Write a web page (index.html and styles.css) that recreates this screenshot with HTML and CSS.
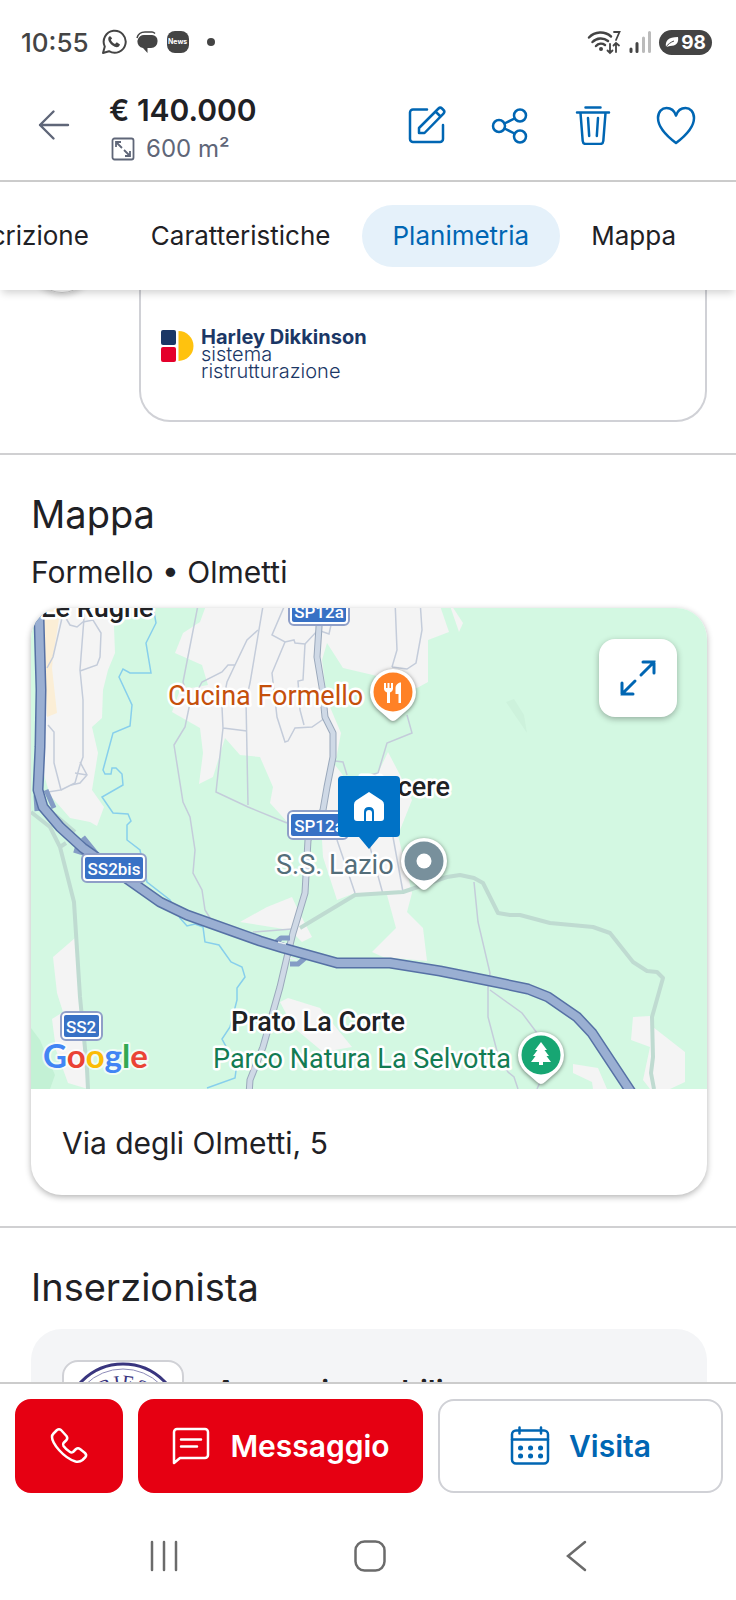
FILE: index.html
```html
<!DOCTYPE html>
<html lang="it">

<head>
  <meta charset="UTF-8">
  <meta name="viewport" content="width=device-width, initial-scale=1.0">
  <title>Annuncio</title>
  <link rel="stylesheet" href="styles.css">
</head>

<body>
  <div class="screen">
    <div class="status-bar">
      <span class="clock">10:55</span>
      <svg class="status-whatsapp" width="26" height="26" viewBox="0 0 26 26">
        <path d="M2 24l1.800-6.400A11 11 0 1 1 8 22.200z" fill="none" stroke="#444" stroke-width="2" stroke-linejoin="round" />
        <path d="M9 7c-3 1.500-2 6 2.200 9.200 4 3 7 2.300 7.800-.7l-3.200-2.200-1.800 1.600c-2-.8-3.500-2.300-4.200-4.200l1.400-1.500z" fill="#444" />
      </svg>
      <svg width="22" height="24" viewBox="0 0 22 24">
        <path d="M1 8C2 4 5 2 9 2h7c1 0 2 .5 3 1.500" fill="none" stroke="#444" stroke-width="1.500" />
        <path d="M9 5h7a5.500 5.500 0 0 1 5.500 6A6.500 6.500 0 0 1 15 18h-3.500v5L7 18A6.500 6.500 0 0 1 9 5z" fill="#444" />
      </svg>
      <span class="news-badge">News</span>
      <span class="dot"></span>
      <div class="status-right">
        <svg width="34" height="26" viewBox="0 0 34 26" fill="none" stroke="#444" stroke-linecap="round">
          <path d="M2 8.500a16 16 0 0 1 22-1M5.500 13a11.500 11.500 0 0 1 15.500-1M9 17a7 7 0 0 1 9-1" stroke-width="2.500" />
          <circle cx="14" cy="20" r="2" fill="#444" stroke="none" />
          <path d="M27 3h5.500l-3.500 8M23 15v9M20.500 21.500L23 24l2.500-2.500M29 23v-9M26.500 16.500L29 14l3 2.500" stroke-width="1.800" />
        </svg>
        <svg width="22" height="24" viewBox="0 0 22 24" stroke-width="3" stroke-linecap="round">
          <path d="M2 19v2.500M8 13.500v8" stroke="#444" />
          <path d="M14.500 8v13.500M20.500 2.500v19" stroke="#bbb" />
        </svg>
        <span class="battery">
          <svg width="14" height="12" viewBox="0 0 14 12">
            <path d="M1 11C0 5 3 1 13 1c1 6-2 9-8 9z" fill="#fff" />
            <path d="M0 12C3 8 6 6 9 5" fill="none" stroke="#444" />
          </svg>
          98
        </span>
      </div>
    </div>

    <header class="header">
      <button class="icon-button" aria-label="Indietro">
        <svg width="32" height="32" viewBox="0 0 32 32" fill="none" stroke="#5f6678" stroke-width="2.400" stroke-linecap="round" stroke-linejoin="round">
          <path d="M30 16H2M15.500 2.500L2 16l13.500 13.500" />
        </svg>
      </button>
      <div class="summary">
        <div class="price">€ 140.000</div>
        <div class="surface">
          <svg width="24" height="24" viewBox="0 0 24 24" fill="none" stroke="#5f6678" stroke-width="1.800">
            <rect x="1.500" y="1.500" width="21" height="21" rx="2" />
            <path d="M5 10V5h5M5 5l6 6M19 14v5h-5M19 19l-6-6" />
          </svg>
          600 m²
        </div>
      </div>
      <div class="actions">
        <button class="icon-button" aria-label="Modifica">
          <svg width="40" height="40" viewBox="0 0 40 40" class="icon">
            <path d="M20 4.500H6a3 3 0 0 0-3 3V34a3 3 0 0 0 3 3h27a3 3 0 0 0 3-3V20" />
            <path d="M12 23L31.500 3.500a2.500 2.500 0 0 1 3.500 0l1.500 1.500a2.500 2.500 0 0 1 0 3.500L17.500 28H12zM28.500 6.500l5 5" />
          </svg>
        </button>
        <button class="icon-button" aria-label="Condividi">
          <svg width="40" height="40" viewBox="0 0 40 40" class="icon">
            <circle cx="9" cy="21" r="6" />
            <circle cx="30" cy="10.500" r="6" />
            <circle cx="30" cy="31.500" r="6" />
            <path d="M14.500 18.500l10-5M14.500 23.500l10 5" />
          </svg>
        </button>
        <button class="icon-button" aria-label="Elimina">
          <svg width="40" height="40" viewBox="0 0 40 40" class="icon">
            <path d="M12.500 2.500h15M4 7.500h32M7.500 8l2.200 28c.2 2 1.300 3 3.300 3h14c2 0 3.100-1 3.300-3L32.500 8M15 13l1.200 18M25 13l-1.200 18" />
          </svg>
        </button>
        <button class="icon-button" aria-label="Salva">
          <svg width="40" height="40" viewBox="0 0 40 40" class="icon">
            <path d="M20 38C12 32 2 23 2 13 2 6.500 6 3 10.500 3 15 3 18.500 6 20 10.500 21.500 6 25 3 29.500 3 34 3 38 6.500 38 13c0 10-10 19-18 25z" />
          </svg>
        </button>
      </div>
    </header>

    <nav class="tabs">
      <a class="tab" href="#">Descrizione</a>
      <a class="tab" href="#">Caratteristiche</a>
      <a class="tab active" href="#">Planimetria</a>
      <a class="tab" href="#mappa">Mappa</a>
    </nav>

    <main class="content">
      <section class="partner">
        <div class="round-handle"></div>
        <div class="partner-card">
          <svg width="34" height="32" viewBox="0 0 34 32">
            <rect x="0" y="0" width="15" height="15" rx="2" fill="#1b3766" />
            <rect x="0" y="17" width="15" height="15" rx="2" fill="#e4002b" />
            <path d="M17.500 1v30a15 15 0 0 0 0-30z" fill="#ffc20e" />
          </svg>
          <div class="partner-name">
            <b>Harley Dikkinson</b>
            <span>sistema</span>
            <span>ristrutturazione</span>
          </div>
        </div>
      </section>

      <section class="section" id="mappa">
        <h2>Mappa</h2>
        <p class="place">Formello • Olmetti</p>
        <div class="map-card">
          <svg class="map" viewBox="31 608 676 481" preserveAspectRatio="xMidYMid slice">
            <rect x="0" y="590" width="740" height="520" fill="#d3f8e2" />
            <path d="M31 1028l9 12 15 35-5 14H31z" fill="#c3f1d5" />
            <path d="M506 702l8-3 10 16 3 18z" fill="#cdf2dc" />

            <!-- built-up areas -->
            <g fill="#f4f4f4">
              <path d="M43 600H118L114 627 115 653 108 670 103 690 102 718 92 727 98 753 92 790 104 807 97 826 90 822 70 818 50 795 44 775z" />
              <path d="M208 600L200 622 183 633 175 653 202 665 208 685 180 690 172 712 200 728 203 753 199 784 213 777 225 738 240 755 260 757 273 787 270 803 290 825 322 840 323 857 337 900 355 893 387 895 396 928 372 952 383 957 427 961 423 928 407 912 412 893 398 835 412 800 400 775 388 752 378 773 345 778 335 765 341 733 327 700 322 660 327 643 343 668 373 675 417 688 428 682 428 640 449 632 438 600z" />
              <path d="M448 600L463 623 459 632z" />
              <path d="M240 922l27-15 25-10 6 13 14 27-10 5-12-12z" />
              <path d="M75 938L53 957 57 993 63 1012 52 1019 56 1050 68 1083 88 1089 80 1012z" />
              <path d="M280 1002l8-4 32 10 32 39-29 5-30-25z" />
              <path d="M633 1017l17-1 3 11 32 25v30l-15 7h-20l-7-9 7-33-19-7z" />
              <path d="M573 1064l25 4 9 21h-14l-1-7-19-9z" />
            </g>
            <path d="M43 600H62L53 657 52 668 57 713 47 717z" fill="#fbeed6" />

            <!-- water -->
            <g fill="none" stroke="#87cfec" stroke-width="1.500">
              <path d="M152 600L156 623 146 643 151 673H130L123 669 119 677 132 705 130 726 113 733 103 770 105 774H111L112 768H116L122 774 123 785 102 797 113 813 128 814 131 821 127 825V840L140 850 147 882 170 900 180 918 187 926 195 924 203 927 205 942 219 945 231 962 242 967 245 977 237 988V1000L230 1027 222 1039 228 1050 237 1063 235 1078 207 1088" />
            </g>

            <!-- minor roads -->
            <g fill="none" stroke="#c4ccda" stroke-width="1.500">
              <path d="M84 600V618L80 670 83 700V757L80 765 75 783 61 790" />
              <path d="M64 615L70 625 77 627 83 622 93 620 101 633 100 657 97 665 80 671" />
              <path d="M62 618L53 657 47 668M48 725L54 732V763L61 790 48 792M80 762L87 775 80 783 71 785M75 773L87 775" />
              <path d="M199 600L183 682 190 703 185 727 174 745 183 802 190 817 195 850 193 873 202 890 205 910 210 918" />
              <path d="M258 630L247 640 235 665H228L222 672 202 682 195 695M235 665L227 682 222 707 223 728 216 792 248 807 287 823M223 728L247 731" />
              <path d="M264 600L250 683 246 700 248 805" />
              <path d="M287 600L272 635 285 642 294 640 295 643 305 644 318 630 329 634 331 625" />
              <path d="M285 642L272 673 277 717 285 742 288 741 295 728 312 727 325 718M305 644L303 680 298 681 300 710 304 725" />
              <path d="M395 600L397 650 392 667M420 600L422 630 416 663 407 669 392 667M407 715L412 733 387 743 378 773 362 777M335 761L343 762 347 775" />
              <path d="M337 840L355 893M370 847L383 894M393 837L403 892M253 932L292 929" />
              <path d="M474 882L478 922 490 973 488 988V1017L498 1055 508 1072 514 1077 518 1089M490 990L522 1013 537 1033M541 1080L537 1089" />
            </g>
            <g fill="none" stroke="#bfdbd1" stroke-width="4" stroke-linejoin="round">
              <path d="M300 928L355 895 403 892 447 877 460 875 474 878 483 883 498 913 510 915 520 915 550 923 593 927 610 933 633 962 647 971 657 972 663 978 652 1017 653 1057 651 1073 654 1089" />
              <path d="M31 812L50 827 60 847 74 902 80 997 87 1069 88 1089M55 815L75 832M60 847L66 843" />
            </g>

            <!-- SP12a -->
            <path d="M319 600V627L317 657 322 687 325 717 333 733V757L327 787 323 810 308 840 305 893 293 933 287 957 280 987 263 1047 250 1080 249 1095" class="road-casing" />
            <path d="M319 600V627L317 657 322 687 325 717 333 733V757L327 787 323 810 308 840 305 893 293 933 287 957 280 987 263 1047 250 1080 249 1095" class="road" />

            <!-- SS2bis -->
            <path d="M274 944L281 938H290M290 964H298L305 958M46 790L54 808M36 795L37 811M83 837L100 858M74 850L90 855" class="ramp" />
            <path d="M39 600V618L41 690 40 747 38 790 43 807 60 827 83 848 133 883 160 902 187 915 260 941 283 948 337 963H390L440 971 490 981 528 989 548 997 577 1017 592 1033 629 1089 640 1106" class="highway-casing" />
            <path d="M39 600V618L41 690 40 747 38 790 43 807 60 827 83 848 133 883 160 902 187 915 260 941 283 948 337 963H390L440 971 490 981 528 989 548 997 577 1017 592 1033 629 1089 640 1106" class="highway" />
            <path d="M278 942l8 2M290 958l7 2" stroke="#e9f1f4" stroke-width="1.500" />

            <!-- road shields -->
            <g class="shield">
              <rect x="289" y="596" width="60" height="29" rx="5" />
              <rect x="292" y="599" width="54" height="23" rx="2" class="plate" />
              <text x="319" y="618">SP12a</text>
              <rect x="288" y="811" width="60" height="28" rx="5" />
              <rect x="291" y="814" width="54" height="22" rx="2" class="plate" />
              <text x="319" y="832">SP12a</text>
              <rect x="82" y="854" width="64" height="28" rx="5" />
              <rect x="85" y="857" width="58" height="22" rx="2" class="plate" />
              <text x="114" y="875">SS2bis</text>
              <rect x="61" y="1012" width="41" height="28" rx="5" />
              <rect x="64" y="1015" width="35" height="22" rx="2" class="plate" />
              <text x="81" y="1033">SS2</text>
            </g>

            <!-- labels -->
            <g class="label">
              <text x="41" y="617" class="town">Le Rughe</text>
              <text x="450" y="796" text-anchor="end" class="town">Piacere</text>
              <text x="231" y="1031" class="town">Prato La Corte</text>
              <text x="168" y="705" fill="#c5500b">Cucina Formello</text>
              <text x="276" y="874" fill="#546e7a">S.S. Lazio</text>
              <text x="213" y="1068" fill="#137c53">Parco Natura La Selvotta</text>
              <text x="43" y="1068" class="google"><tspan fill="#4285f4">G</tspan><tspan fill="#ea4335">o</tspan><tspan fill="#fbbc05">o</tspan><tspan fill="#4285f4">g</tspan><tspan fill="#34a853">l</tspan><tspan fill="#ea4335">e</tspan></text>
            </g>

            <!-- pins -->
            <g transform="translate(393 692)">
              <path class="pin" d="M-16 16.500L-4 27Q0 31 4 27L16 16.500A23 23 0 1 0-16 16.500z" />
              <circle r="19.500" fill="#ff8126" />
              <path d="M-8-9v6M-4.500-9v6M-1-9v6" stroke="#fff" stroke-width="2" />
              <path d="M-9-4h9a4.500 4.500 0 0 1-3 4.500V11h-3V.5A4.500 4.500 0 0 1-9-4zM8-9.500V11H5.500V2H2.500v-6C2.500-7 5-9.500 8-9.500z" fill="#fff" />
            </g>
            <g transform="translate(424 861)">
              <path class="pin" d="M-16 16.500L-4 27Q0 31 4 27L16 16.500A23 23 0 1 0-16 16.500z" />
              <circle r="19.500" fill="#78909c" />
              <circle r="7.500" fill="#fff" />
            </g>
            <g transform="translate(541 1055)">
              <path class="pin" d="M-16 16.500L-4 27Q0 31 4 27L16 16.500A23 23 0 1 0-16 16.500z" />
              <circle r="19.500" fill="#17a673" />
              <path d="M0-13L6-5H3.500L8 1H5.500L10 7H2V10H-2V7H-10L-5.500 1H-8L-3.500-5H-6z" fill="#fff" />
            </g>
            <path d="M342 776h54a4 4 0 0 1 4 4v53a4 4 0 0 1-4 4h-17l-10 12-10-12h-17a4 4 0 0 1-4-4v-53a4 4 0 0 1 4-4z" fill="#0072c6" />
            <path d="M369 792l13 8.500q2 1.500 2 4V818q0 3-3 3h-7v-9q0-5-5-5t-5 5v9h-7q-3 0-3-3v-13.500q0-2.500 2-4z" fill="#fff" />
            <path d="M366 821v-8q0-3 3-3t3 3v8z" fill="#fff" />
          </svg>
          <button class="expand" aria-label="Espandi mappa">
            <svg width="40" height="40" viewBox="0 0 40 40" fill="none" stroke="#0066b3" stroke-width="3" stroke-linecap="round">
              <path d="M23 17L36 4M25 4h11v11M17 23L4 36M4 25v11h11" />
            </svg>
          </button>
          <div class="address">Via degli Olmetti, 5</div>
        </div>
      </section>

      <section class="section">
        <h2>Inserzionista</h2>
        <div class="agency">
          <div class="agency-logo">
            <svg width="118" height="118" viewBox="0 0 118 118">
              <defs>
                <path id="arc" d="M24 62a35 35 0 0 1 70 0" />
              </defs>
              <circle cx="59" cy="60" r="58" fill="none" stroke="#39357f" stroke-width="3" />
              <circle cx="59" cy="60" r="53" fill="none" stroke="#8d8bb8" />
              <text class="seal"><textPath href="#arc" startOffset="50%">A RIES A</textPath></text>
            </svg>
          </div>
          <div class="agency-name">Aurora immobiliare</div>
        </div>
      </section>
    </main>

    <div class="bottom-bar">
      <button class="cta call" aria-label="Chiama">
        <svg width="40" height="40" viewBox="0 0 40 40" class="icon">
          <path d="M4.500 7.500l3.500-3.500q2-1.500 4 0l5.500 6q1.500 2 0 4l-3 3q-1 1.500 0 3 2.500 3.500 6.500 6 1.500 1 3 0l3-3q2-1.500 4 0l5 4q2 2 .5 4l-3 3q-3 2.500-7 1.500Q18 33 10 24 3 16 3 11q0-2 1.500-3.500z" />
        </svg>
      </button>
      <button class="cta message">
        <svg width="40" height="40" viewBox="0 0 40 40" class="icon">
          <path d="M3 37V6a3 3 0 0 1 3-3h28a3 3 0 0 1 3 3v23a3 3 0 0 1-3 3H9zM10 13.500h20M10 20.500h16" />
        </svg>
        Messaggio
      </button>
      <button class="cta visit">
        <svg width="40" height="40" viewBox="0 0 40 40" class="icon">
          <rect x="2" y="4.500" width="36" height="33" rx="4" />
          <path d="M2 13.500h36M9.500 1.500v6M31 1.500v6" />
          <path d="M10.500 22h.1M20.500 22h.1M30.500 22h.1M10.500 30h.1M20.500 30h.1M30.500 30h.1" stroke-width="5" />
        </svg>
        Visita
      </button>
    </div>

    <div class="system-nav">
      <button class="icon-button" aria-label="Recenti">
        <svg width="32" height="32" viewBox="0 0 32 32" class="nav-icon">
          <path d="M4 2v28M16 2v28M28 2v28" />
        </svg>
      </button>
      <button class="icon-button" aria-label="Home">
        <svg width="32" height="32" viewBox="0 0 32 32" class="nav-icon">
          <rect x="1.500" y="1.500" width="29" height="29" rx="9" />
        </svg>
      </button>
      <button class="icon-button" aria-label="Indietro">
        <svg width="32" height="32" viewBox="0 0 32 32" class="nav-icon">
          <path d="M25 2L8 16l17 14" />
        </svg>
      </button>
    </div>
  </div>
</body>

</html>
```
FILE: styles.css
```css
* {
  box-sizing: border-box;
}

body {
  margin: 0;
  background-color: #fff;
  color: #1f2125;
  font-family: Inter, "Liberation Sans", sans-serif;
}

h2,
p {
  margin: 0;
  font-weight: 400;
}

button {
  margin: 0;
  padding: 0;
  border: none;
  background: none;
  font-family: inherit;
  cursor: pointer;
}

svg {
  display: block;
  flex-shrink: 0;
}

.screen {
  display: flex;
  flex-direction: column;
  height: 100vh;
}

/* status bar */
.status-bar {
  display: flex;
  align-items: center;
  gap: 9px;
  height: 84px;
  padding: 0 24px 0 21px;
  flex-shrink: 0;
  color: #444;
}

.clock {
  margin-right: 3px;
  font-size: 26px;
  font-weight: 500;
}

.news-badge {
  width: 22px;
  height: 22px;
  border-radius: 8px;
  background-color: #444;
  color: #fff;
  font-size: 7px;
  font-weight: 700;
  line-height: 22px;
  text-align: center;
}

.dot {
  width: 8px;
  height: 8px;
  margin-left: 9px;
  border-radius: 50%;
  background-color: #444;
}

.status-right {
  display: flex;
  align-items: center;
  gap: 8px;
  margin-left: auto;
}

.battery {
  display: flex;
  align-items: center;
  justify-content: center;
  gap: 2px;
  width: 53px;
  height: 25px;
  border-radius: 13px;
  background-color: #444;
  color: #fff;
  font-size: 19px;
  font-weight: 700;
}

/* header */
.header {
  display: flex;
  align-items: center;
  height: 98px;
  padding: 0 40px 14px 38px;
  border-bottom: 2px solid #ccc;
  flex-shrink: 0;
}

.summary {
  margin-top: 8px;
  margin-left: 39px;
}

.price {
  font-size: 30px;
  font-weight: 600;
  line-height: 40px;
}

.surface {
  display: flex;
  align-items: center;
  gap: 11px;
  padding-left: 2px;
  color: #5f6678;
  font-size: 24px;
  line-height: 38px;
}

.actions {
  display: flex;
  gap: 43px;
  margin-left: auto;
}

.icon {
  fill: none;
  stroke: currentColor;
  stroke-width: 2.5px;
  stroke-linecap: round;
  stroke-linejoin: round;
}

.actions .icon {
  stroke: #0066b3;
}

/* tabs */
.tabs {
  position: relative;
  display: flex;
  align-items: center;
  justify-content: flex-end;
  height: 108px;
  padding-right: 29px;
  background-color: #fff;
  box-shadow: 0 5px 8px -2px rgba(0, 0, 0, 0.18);
  overflow: hidden;
  flex-shrink: 0;
}

.tab {
  padding: 0 31px;
  border-radius: 31px;
  color: #1f2125;
  font-size: 26px;
  line-height: 62px;
  text-decoration: none;
}

.tab.active {
  background-color: #e5f1fa;
  color: #0066b3;
}

/* content */
.content {
  flex: 1;
  min-height: 0;
  overflow: hidden;
}

.partner {
  display: flex;
  gap: 46px;
  padding: 0 29px 31px 31px;
  border-bottom: 2px solid #d0d0d2;
}

.round-handle {
  width: 62px;
  height: 62px;
  margin-top: -59px;
  border: 1px solid #ccc;
  border-radius: 50%;
  box-shadow: 0 2px 6px rgba(0, 0, 0, 0.2);
}

.partner-card {
  display: flex;
  flex: 1;
  gap: 6px;
  height: 132px;
  padding: 40px 20px 0;
  border: 2px solid #d0d1d6;
  border-top: none;
  border-radius: 0 0 31px 31px;
}

.partner-name {
  display: flex;
  flex-direction: column;
  margin-top: -1px;
  color: #1b3766;
  font-size: 20px;
  font-weight: 300;
  line-height: 17px;
}

.partner-name b {
  font-weight: 700;
}

.section {
  padding: 36px 29px 31px 31px;
  border-bottom: 2px solid #d0d0d2;
}

h2 {
  font-size: 38px;
  line-height: 46px;
}

.place {
  margin-top: 16px;
  font-size: 30px;
  line-height: 38px;
}

.map-card {
  position: relative;
  margin-top: 17px;
  border-radius: 31px;
  overflow: hidden;
  box-shadow: 0 2px 6px rgba(0, 0, 0, 0.3);
}

.map {
  width: 100%;
  height: 481px;
}

.expand {
  position: absolute;
  top: 31px;
  right: 30px;
  display: flex;
  align-items: center;
  justify-content: center;
  width: 78px;
  height: 78px;
  border-radius: 16px;
  background-color: #fff;
  box-shadow: 0 2px 6px rgba(0, 0, 0, 0.3);
}

.address {
  padding: 33px 31px 31px;
  font-size: 30px;
  line-height: 42px;
}

/* map drawing */
.road-casing,
.road,
.highway-casing,
.highway,
.ramp {
  fill: none;
  stroke-linejoin: round;
}

.road-casing {
  stroke: #9aa8bb;
  stroke-width: 7px;
}

.road {
  stroke: #cfd9e6;
  stroke-width: 5px;
}

.highway-casing {
  stroke: #5671a5;
  stroke-width: 11px;
}

.highway {
  stroke: #9aafd2;
  stroke-width: 8px;
}

.ramp {
  stroke: #849cc5;
  stroke-width: 5px;
}

.shield rect {
  fill: #fff;
  stroke: #8f9fc8;
  stroke-width: 2px;
}

.shield .plate {
  fill: #3871c5;
  stroke: none;
}

.shield text {
  fill: #fff;
  font-family: Roboto, sans-serif;
  font-size: 17px;
  font-weight: 500;
  text-anchor: middle;
}

.label text {
  font-family: Roboto, sans-serif;
  font-size: 27px;
  stroke: #fff;
  stroke-width: 5px;
  stroke-linejoin: round;
  paint-order: stroke;
}

.label .town {
  fill: #202124;
  font-weight: 500;
}

.label .google {
  font-family: Lato, sans-serif;
  font-size: 33px;
  font-weight: 700;
  stroke-width: 4px;
  stroke-opacity: 0.7;
}

.pin {
  fill: #fff;
  filter: drop-shadow(0 1px 2px rgba(0, 0, 0, 0.5));
}

/* agency */
.agency {
  display: flex;
  gap: 31px;
  height: 200px;
  margin-top: 19px;
  padding: 31px;
  border-radius: 31px;
  background-color: #f4f5f7;
}

.agency-logo {
  width: 122px;
  height: 122px;
  border: 2px solid #d0d1d6;
  border-radius: 16px;
  background-color: #fff;
  overflow: hidden;
}

.seal {
  fill: #39357f;
  font-family: "Liberation Serif", serif;
  font-size: 20px;
  text-anchor: middle;
}

.agency-name {
  padding-top: 13px;
  font-size: 30px;
  font-weight: 600;
  line-height: 36px;
}

/* bottom bar */
.bottom-bar {
  display: flex;
  gap: 15px;
  padding: 15px 13px 19px 15px;
  border-top: 2px solid #ccc;
  background-color: #fff;
  flex-shrink: 0;
}

.cta {
  display: flex;
  flex: 1;
  align-items: center;
  justify-content: center;
  gap: 19px;
  height: 94px;
  border: 2px solid #e60012;
  border-radius: 16px;
  background-color: #e60012;
  color: #fff;
  font-size: 30px;
  font-weight: 600;
}

.call {
  flex: 0 0 108px;
}

.visit {
  border-color: #d0d1d6;
  background-color: #fff;
  color: #0066b3;
}

.system-nav {
  display: flex;
  justify-content: space-around;
  align-items: center;
  height: 88px;
  padding: 0 57px 0 61px;
  flex-shrink: 0;
}

.nav-icon {
  fill: none;
  stroke: #6b6b6b;
  stroke-width: 2.5px;
  stroke-linecap: round;
}
```
